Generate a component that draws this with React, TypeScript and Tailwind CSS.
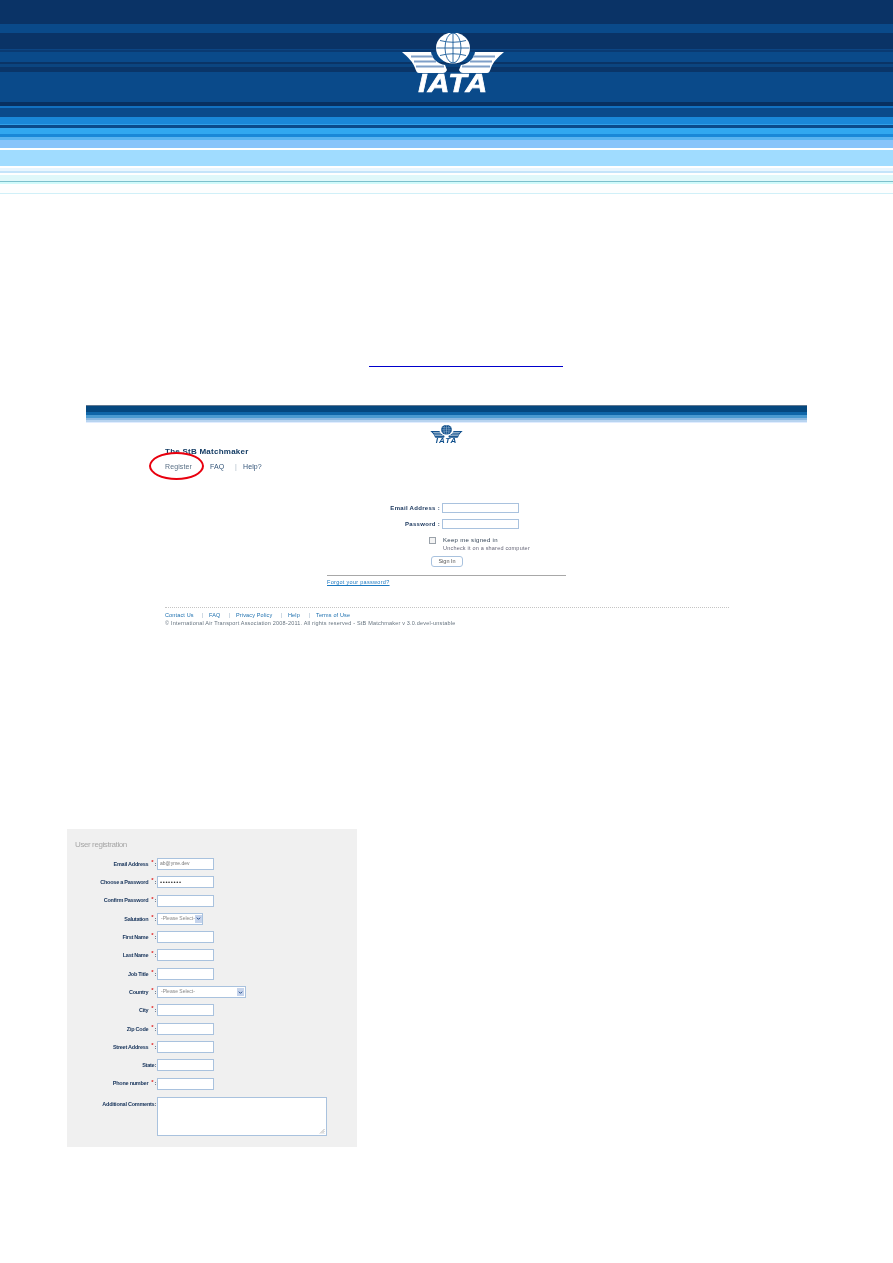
import React from "react";

const bannerStripes = [
  "h-[24px] bg-[#0a3366]", "h-[9px] bg-[#0a4a8a]", "h-[16px] bg-[#0a3366]", "h-px bg-[#0c4583]", "h-[2px] bg-[#0a3a72]",
  "h-[10px] bg-[#0a4a8a]", "h-[2px] bg-[#0a3466]", "h-[3px] bg-[#0b4580]", "h-[5px] bg-[#0a3568]", "h-[30px] bg-[#0a4a8a]",
  "h-[4px] bg-[#083060]", "h-[2px] bg-[#1270c0]", "h-[9px] bg-[#0a4a8a]", "h-[7px] bg-[#1a88d8]", "h-px bg-[#30a0e8]",
  "h-[3px] bg-[#0a4a8a]", "h-[6px] bg-[#32a8f0]", "h-[3px] bg-[#1a88d8]", "h-[3px] bg-[#5ab4f0]", "h-[8px] bg-[#88c4fa]",
  "h-[2px] bg-white", "h-[16px] bg-[#a0dcff]", "h-[2px] bg-white", "h-[3px] bg-[#e8f6ff]", "h-[2px] bg-[#c4e4fa]",
  "h-[2px] bg-white", "h-[6px] bg-[#dff8fa]", "h-px bg-[#7cc0cc]", "h-[2px] bg-[#d0fafa]", "h-[9px] bg-[#fdfefe]", "h-px bg-[#d0f0f8]",
];

const shotStripes = [
  "h-px bg-[#607890]", "h-[6px] bg-[#05487f]", "h-[3px] bg-[#0f66a8]", "h-[3px] bg-[#4a9ad0]",
  "h-[2px] bg-[#8ab8e0]", "h-[2px] bg-[#b8d4f0]", "h-px bg-[#e0ecff]",
];

function Emblem({ className, ink, line, band }: { className: string; ink: string; line: string; band: string }) {
  const wing = "M0 19 L29 19 C30 26 36 31 43 32 L45 37 C44 39 43 40 41 40 L17 40 C15 40 14 38 13 35 C11 29 6 24 0 19 Z";
  return (
    <svg viewBox="0 0 102 41" className={className}>
      <path d={wing} fill={ink} />
      <path d={wing} fill={ink} transform="translate(102 0) scale(-1 1)" />
      <g stroke={band} strokeWidth="1.8" fill="none">
        <path d="M9 23.5H31M12 28.5H34M14 33.5H42M93 23.5H71M90 28.5H68M88 33.5H60" />
      </g>
      <ellipse cx="51" cy="15" rx="17" ry="15.5" fill={ink} />
      <g stroke={line} strokeWidth="0.9" fill="none">
        <ellipse cx="51" cy="15" rx="8" ry="15" />
        <path d="M51 0V30M34.5 15H67.5M38 7.5Q51 11 64 7.5M38 22.5Q51 19 64 22.5" />
      </g>
    </svg>
  );
}

function Inp({ className = "w-[57px]", value = "", mono = false }: { className?: string; value?: string; mono?: boolean }) {
  return (
    <div className={`${className} h-[12px] shrink-0 border border-[#a9c2de] bg-white px-[2px] flex items-center whitespace-nowrap ${mono ? "text-[6px] tracking-[0.6px] text-[#333]" : "text-[5px] text-[#777]"}`}>
      {value}
    </div>
  );
}

function Sel({ className, text }: { className: string; text: string }) {
  return (
    <div className={`${className} h-[12px] shrink-0 border border-[#a9c2de] bg-white pl-[3px] pr-px flex items-center justify-between text-[5px] text-[#888]`}>
      <span className="whitespace-nowrap">{text}</span>
      <span className="w-[7px] h-[8px] shrink-0 bg-[#c6d4ec] flex items-center justify-center">
        <svg viewBox="0 0 6 6" className="w-[5px] h-[5px]"><path d="M1 2l2 2 2-2" stroke="#234a8a" strokeWidth="1.2" fill="none" /></svg>
      </span>
    </div>
  );
}

function Label({ text, req = true, space = true }: { text: string; req?: boolean; space?: boolean }) {
  return (
    <div className="w-[89px] mr-px shrink-0 flex justify-end items-center text-[5.5px] tracking-[-0.25px] font-bold text-[#16335a] whitespace-nowrap">
      <span>{text}</span>
      {req && <span className="text-[#e02020] text-[6px] ml-[3px] -mt-[4px] leading-none">*</span>}
      <span className={space ? "ml-px" : ""}>:</span>
    </div>
  );
}

function Row({ children }: { children: React.ReactNode }) {
  return <div className="flex items-center h-[12px]">{children}</div>;
}

export default function App() {
  return (
    <div className="w-[893px] h-[1263px] bg-white overflow-hidden font-['Liberation_Sans',Arial,sans-serif]">
      {/* Banner */}
      <div className="relative h-[194px] flex flex-col">
        {bannerStripes.map((s, i) => (
          <div key={i} className={s} />
        ))}
        <div className="absolute left-[402px] top-[33px] w-[102px] flex flex-col items-center blur-[0.3px]">
          <Emblem className="w-[102px] h-[41px]" ink="#ffffff" line="#1b5c9a" band="#7f9fc8" />
          <span className="-mt-[3px] ml-px scale-x-[1.2] text-[25px] leading-[25px] font-bold italic tracking-[1px] text-white [-webkit-text-stroke:0.7px_white]">IATA</span>
        </div>
      </div>

      {/* Link underline */}
      <div className="mt-[172px] ml-[369px] w-[194px] h-px bg-[#0000cc]" />

      {/* Embedded login screenshot */}
      <div className="relative mt-[38px] ml-[86px] w-[721px] blur-[0.45px]">
        <div className="flex flex-col">
          {shotStripes.map((s, i) => (
            <div key={i} className={s} />
          ))}
        </div>
        <div className="mt-[2px] h-[20px] flex flex-col items-center">
          <Emblem className="w-[33px] h-[13px]" ink="#0f4f8c" line="#ffffff" band="#ffffff" />
          <span className="-mt-px text-[8px] leading-[7px] font-bold italic tracking-[1px] text-[#0f4f8c]">IATA</span>
        </div>
        <div className="pl-[79px]">
          <div className="mt-[2px] h-[10px] leading-[10px] text-[8px] font-bold tracking-[0.25px] text-[#143c64]">The StB Matchmaker</div>
          <div className="mt-[5px] h-[10px] leading-[10px] flex text-[7px] tracking-[0.1px] text-[#35567a]">
            <span className="w-[45px] text-[#5a7086]">Register</span>
            <span className="w-[25px]">FAQ</span>
            <span className="w-[8px] text-[#aab8c4]">|</span>
            <span>Help?</span>
          </div>
        </div>

        {/* Login form */}
        <div className="mt-[31px] ml-[241px] w-[239px]">
          <div className="flex items-center h-[10px]">
            <span className="w-[113px] text-right text-[6px] font-bold tracking-[0.3px] text-[#16335a]">Email Address :</span>
            <div className="ml-[2px] w-[77px] h-[10px] border border-[#a9c2de] bg-white" />
          </div>
          <div className="mt-[6px] flex items-center h-[10px]">
            <span className="w-[113px] text-right text-[6px] font-bold tracking-[0.3px] text-[#16335a]">Password :</span>
            <div className="ml-[2px] w-[77px] h-[10px] border border-[#a9c2de] bg-white" />
          </div>
          <div className="mt-[7px] ml-[102px] flex">
            <div className="mt-px w-[7px] h-[7px] border border-[#9aa2aa] bg-[#f4f4f4]" />
            <div className="ml-[7px]">
              <div className="h-[8px] leading-[8px] text-[6px] tracking-[0.3px] text-[#2d3e50]">Keep me signed in</div>
              <div className="h-[8px] leading-[8px] text-[5.5px] tracking-[0.2px] text-[#667]">Uncheck it on a shared computer</div>
            </div>
          </div>
          <div className="mt-[4px] ml-[104px] w-[32px] h-[11px] rounded-[3px] border border-[#a9c2de] bg-white flex items-center justify-center text-[5.5px] text-[#555]">Sign In</div>
          <div className="mt-[8px] h-px bg-[#a8a8a8]" />
          <div className="mt-[2px] h-[9px] leading-[9px] text-[5.5px] tracking-[0.3px] text-[#1a78c0] underline">Forgot your password?</div>
        </div>

        {/* Footer */}
        <div className="mt-[20px] ml-[79px] w-[564px] border-t border-dotted border-[#c4c4c4] pt-[3px]">
          <div className="h-[8px] leading-[8px] flex text-[5.5px] tracking-[0.15px] text-[#1a6eae]">
            <span className="w-[37px]">Contact Us</span>
            <span className="w-[7px] text-[#9db4c8]">|</span>
            <span className="w-[20px]">FAQ</span>
            <span className="w-[7px] text-[#9db4c8]">|</span>
            <span className="w-[45px]">Privacy Policy</span>
            <span className="w-[7px] text-[#9db4c8]">|</span>
            <span className="w-[21px]">Help</span>
            <span className="w-[7px] text-[#9db4c8]">|</span>
            <span>Terms of Use</span>
          </div>
          <div className="h-[8px] leading-[8px] text-[5.5px] tracking-[0.2px] text-[#66737f]">© International Air Transport Association 2008-2011. All rights reserved - StB Matchmaker v 3.0.devel-unstable</div>
        </div>

        {/* Annotation circle */}
        <div className="absolute left-[63px] top-[47px] w-[55px] h-[28px] rounded-[50%] border-[2.5px] border-[#e8000e]" />
      </div>

      {/* Registration panel */}
      <div className="mt-[202px] ml-[67px] w-[290px] h-[318px] bg-[#f0f0f0] blur-[0.45px]">
        <div className="pt-[11px] pl-[8px] h-[21px] text-[8px] tracking-[-0.4px] leading-[10px] text-[#a6a6a6]">User registration</div>
        <div className="mt-[8px] flex flex-col gap-[6.3px]">
          <Row><Label text="Email Address" /><Inp value="ab@yme.dev" /></Row>
          <Row><Label text="Choose a Password" /><Inp value="••••••••" mono /></Row>
          <Row><Label text="Confirm Password" /><Inp /></Row>
          <Row><Label text="Salutation" /><Sel className="w-[46px]" text="-Please Select-" /></Row>
          <Row><Label text="First Name" /><Inp /></Row>
          <Row><Label text="Last Name" /><Inp /></Row>
          <Row><Label text="Job Title" /><Inp /></Row>
          <Row><Label text="Country" /><Sel className="w-[89px]" text="-Please Select-" /></Row>
          <Row><Label text="City" /><Inp /></Row>
          <Row><Label text="Zip Code" /><Inp /></Row>
          <Row><Label text="Street Address" /><Inp /></Row>
          <Row><Label text="State" req={false} space={false} /><Inp /></Row>
          <Row><Label text="Phone number" /><Inp /></Row>
          <div className="mt-px flex items-start">
            <div className="mt-[3px]"><Label text="Additional Comments" req={false} space={false} /></div>
            <div className="relative w-[170px] h-[39px] border border-[#a9c2de] bg-white">
              <svg viewBox="0 0 6 6" className="absolute right-px bottom-px w-[6px] h-[6px]"><path d="M5.5 1L1 5.5M5.5 3L3 5.5M5.5 5L5 5.5" stroke="#999" strokeWidth="0.7" /></svg>
            </div>
          </div>
        </div>
      </div>
    </div>
  );
}
